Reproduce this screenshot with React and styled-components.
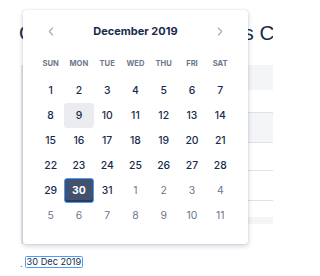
import React from 'react';
import styled, { createGlobalStyle } from 'styled-components';

const GlobalStyle = createGlobalStyle`
  html, body {
    margin: 0;
    padding: 0;
    background: #ffffff;
  }
  body {
    font-family: Inter, "Noto Sans", "Liberation Sans", sans-serif;
    color: #172b4d;
  }
`;

const Page = styled.div`
  position: relative;
  width: 273px;
  height: 276px;
  overflow: hidden;
`;

const Title = styled.h1`
  margin: 0;
  padding: 21px 0 0 19px;
  height: 44px;
  box-sizing: border-box;
  font-size: 20.6px;
  font-weight: 400;
  line-height: 23px;
  white-space: nowrap;
  color: #172b4d;
  font-family: "Liberation Sans", Arial, sans-serif;
`;

const Table = styled.div`
  margin-left: 21px;
  display: flex;
  flex-direction: column;
`;

const Row = styled.div`
  height: ${p => p.h}px;
  background: ${p => (p.shaded ? '#f4f5f7' : '#ffffff')};
  border-top: ${p => (p.line ? '1px solid #dfe1e6' : 'none')};
  border-left: ${p => (p.edge ? '2px solid #e6e7eb' : '2px solid transparent')};
`;

const Footer = styled.div`
  display: flex;
  align-items: center;
  gap: 2px;
  padding: 12px 0 0 20px;
`;

const Dot = styled.span`
  color: #6b778c;
  font-size: 9px;
  line-height: 9px;
  align-self: flex-end;
`;

const DateInput = styled.span`
  display: inline-block;
  padding: 0 1px;
  height: 10px;
  line-height: 10px;
  border: 1.5px solid #4c9aff;
  border-radius: 1.5px;
  color: #172b4d;
  font-size: 9.2px;
  font-family: Inter, "Liberation Sans", sans-serif;
`;

const Popup = styled.div`
  position: absolute;
  left: 23px;
  top: 10px;
  width: 225px;
  height: 234px;
  box-sizing: border-box;
  padding: 11px 13.5px 0;
  background: #ffffff;
  border-radius: 3px;
  box-shadow: 0 2px 5px rgba(9, 30, 66, 0.2), 0 0 1px rgba(9, 30, 66, 0.3);
`;

const Grid = styled.div`
  display: grid;
  grid-template-columns: repeat(7, 28.28px);
`;

const Header = styled(Grid)`
  height: 20px;
  align-items: center;
  margin-bottom: 12px;
`;

const Nav = styled.button`
  justify-self: center;
  grid-column: ${p => p.col};
  display: flex;
  align-items: center;
  justify-content: center;
  width: 20px;
  height: 20px;
  padding: 0;
  border: none;
  background: none;
  color: #a5adba;
`;

const Month = styled.div`
  grid-column: 2 / span 5;
  text-align: center;
  font-size: 11px;
  font-weight: 700;
  color: #172b4d;
`;

const Weekday = styled.div`
  height: 20px;
  display: flex;
  align-items: center;
  justify-content: center;
  font-size: 7.6px;
  font-weight: 700;
  color: #6b778c;
  margin-bottom: 4.5px;
`;

const Day = styled.div`
  justify-self: center;
  width: 30px;
  height: 25px;
  box-sizing: border-box;
  display: flex;
  align-items: center;
  justify-content: center;
  border-radius: 3px;
  font-size: 10.4px;
  font-weight: ${p => (p.muted ? 400 : p.selected ? 700 : 500)};
  color: ${p => (p.selected ? '#ffffff' : p.muted ? '#6b778c' : '#172b4d')};
  background: ${p => (p.selected ? '#42526e' : p.hovered ? '#ebecf0' : 'transparent')};
  border: ${p => (p.selected ? '1.5px solid #4c9aff' : 'none')};
  box-shadow: ${p => (p.selected ? 'inset 0 -2px 0 #2c3b57' : 'none')};
`;

const Chevron = ({ dir }) => (
  <svg width="6" height="9" viewBox="0 0 6 9" fill="none">
    <path
      d={dir === 'left' ? 'M4.6 1 L1.3 4.5 L4.6 8' : 'M1.4 1 L4.7 4.5 L1.4 8'}
      stroke="currentColor"
      strokeWidth="1.1"
      strokeLinecap="round"
      strokeLinejoin="round"
    />
  </svg>
);

const weekdays = ['SUN', 'MON', 'TUE', 'WED', 'THU', 'FRI', 'SAT'];

const days = [
  ...Array.from({ length: 31 }, (_, i) => ({ n: i + 1 })),
  ...Array.from({ length: 11 }, (_, i) => ({ n: i + 1, muted: true })),
];

// background table rows peeking out from behind the picker
const rows = [
  { h: 21 },
  { h: 25, shaded: true, edge: true },
  { h: 22, edge: true },
  { h: 29, shaded: true, line: true, edge: true },
  { h: 27, line: true, edge: true },
  { h: 29, line: true, edge: true },
  { h: 16, line: true, edge: true },
  { h: 7, shaded: true, edge: true },
  { h: 20, edge: true },
];

export default function App() {
  return (
    <Page>
      <GlobalStyle />
      <Title>Oliver Thompson Brown's Calendar</Title>
      <Table>
        {rows.map((r, i) => (
          <Row key={i} h={r.h} shaded={r.shaded} line={r.line} edge={r.edge} />
        ))}
      </Table>
      <Footer>
        <Dot>.</Dot>
        <DateInput>30 Dec 2019</DateInput>
      </Footer>

      <Popup>
        <Header>
          <Nav col={1} aria-label="Previous month">
            <Chevron dir="left" />
          </Nav>
          <Month>December 2019</Month>
          <Nav col={7} aria-label="Next month">
            <Chevron dir="right" />
          </Nav>
        </Header>
        <Grid>
          {weekdays.map(w => (
            <Weekday key={w}>{w}</Weekday>
          ))}
          {days.map((d, i) => (
            <Day
              key={i}
              muted={d.muted}
              hovered={!d.muted && d.n === 9}
              selected={!d.muted && d.n === 30}
            >
              {d.n}
            </Day>
          ))}
        </Grid>
      </Popup>
    </Page>
  );
}
